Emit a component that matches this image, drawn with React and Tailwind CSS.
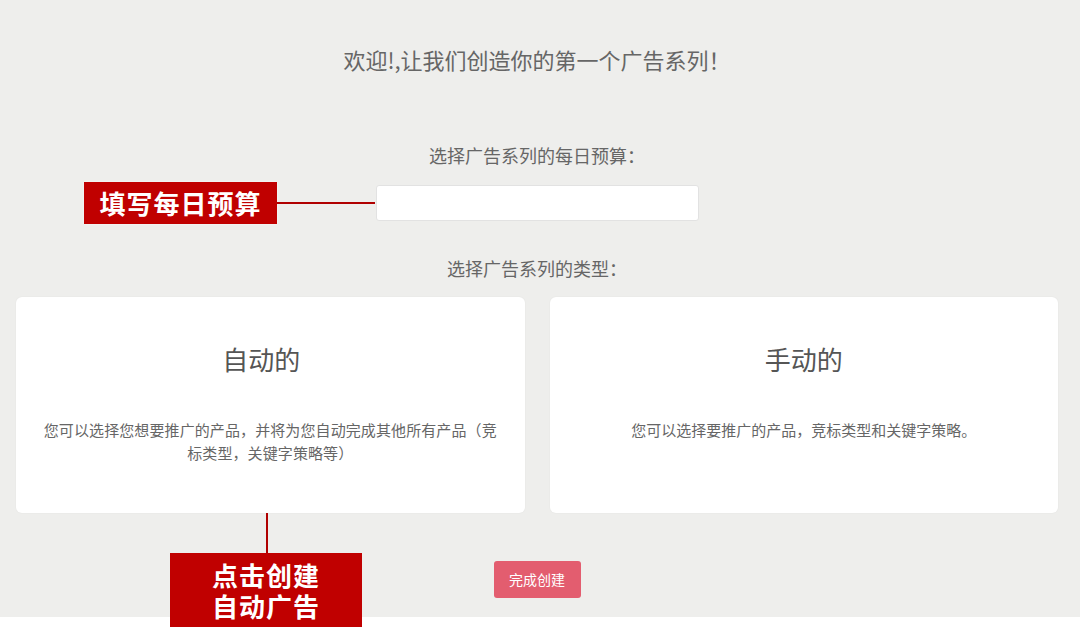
import React from "react";

export default function App() {
  const font = { fontFamily: '"Noto Sans CJK SC", "Noto Sans", sans-serif' };
  return (
    <div className="relative w-[1080px] h-[629px] bg-white overflow-hidden" style={font}>
      <div className="h-[617px] bg-[#eeeeec] pl-[16px] pr-[22px] flex flex-col items-center">
        <h1 className="pt-[44px] text-[22px] leading-[30px] text-[#666]">欢迎!,让我们创造你的第一个广告系列！</h1>
        <p className="mt-[68px] text-[18px] leading-[26px] text-[#666]">选择广告系列的每日预算：</p>
        <input
          type="text"
          className="mt-[17px] w-[323px] h-[36px] bg-white border border-[#e2e2e2] rounded-[3px] outline-none"
        />
        <p className="mt-[34px] text-[18px] leading-[26px] text-[#666]">选择广告系列的类型：</p>
        <div className="mt-[16px] w-full grid grid-cols-2 gap-[25px]">
          <div className="h-[216px] bg-white rounded-[6px] px-[24px] pt-[44px] flex flex-col items-center text-center shadow-[0_0_2px_rgba(0,0,0,0.06)]">
            <h2 className="text-[26px] leading-[36px] text-[#555] -ml-[18px]">自动的</h2>
            <p className="mt-[41px] text-[15px] leading-[23px] text-[#666] tracking-[0.1px]">
              您可以选择您想要推广的产品，并将为您自动完成其他所有产品（竞标类型，关键字策略等）
            </p>
          </div>
          <div className="h-[216px] bg-white rounded-[6px] px-[24px] pt-[44px] flex flex-col items-center text-center shadow-[0_0_2px_rgba(0,0,0,0.06)]">
            <h2 className="text-[26px] leading-[36px] text-[#555]">手动的</h2>
            <p className="mt-[41px] text-[15px] leading-[23px] text-[#666]">
              您可以选择要推广的产品，竞标类型和关键字策略。
            </p>
          </div>
        </div>
        <button className="mt-[48px] w-[87px] h-[37px] rounded-[3px] bg-[#e35d6f] text-white text-[14px]">
          完成创建
        </button>
      </div>

      {/* Annotation 1 */}
      <div className="absolute left-[84px] top-[182px] w-[193px] h-[42px] bg-[#c00000] flex items-center justify-center text-white font-bold text-[26px] leading-none tracking-[1px] shadow-[0_0_2px_rgba(255,255,255,0.8)]">
        填写每日预算
      </div>
      <div className="absolute left-[277px] top-[202px] w-[98px] h-[2px] bg-[#b00000]" />

      {/* Annotation 2 */}
      <div className="absolute left-[266px] top-[513px] w-[2px] h-[40px] bg-[#b00000]" />
      <div className="absolute left-[170px] top-[553px] w-[192px] h-[74px] bg-[#c00000] flex items-center justify-center text-center text-white font-bold text-[26px] leading-[31px] tracking-[1px]">
        <p>
          点击创建
          <br />
          自动广告
        </p>
      </div>
    </div>
  );
}
